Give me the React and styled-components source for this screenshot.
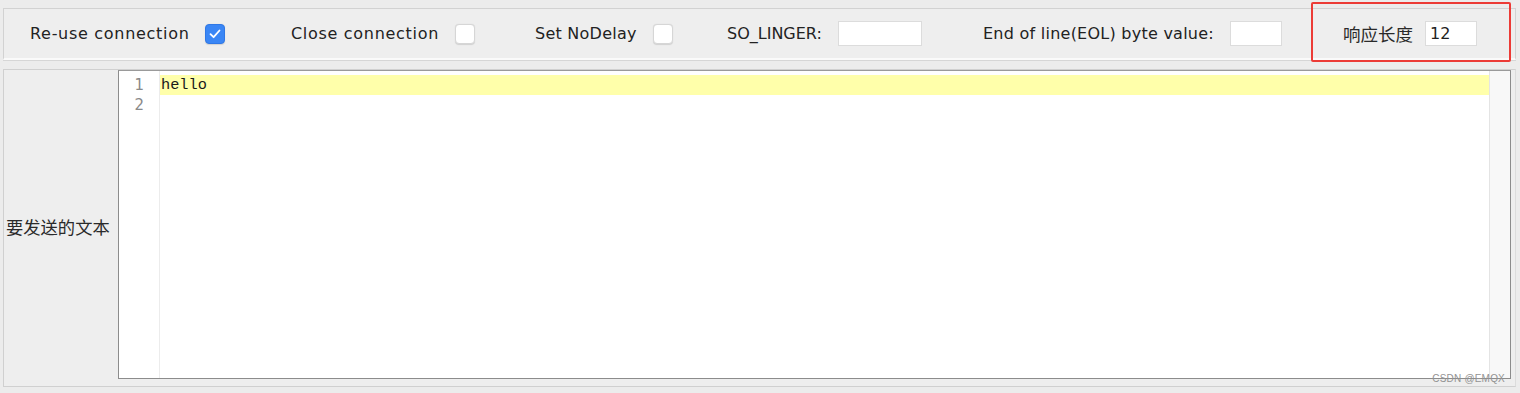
import React from 'react';
import styled, { createGlobalStyle } from 'styled-components';

const GlobalStyle = createGlobalStyle`
  html, body {
    margin: 0;
    padding: 0;
    background: #ececec;
  }
  body {
    font-family: "DejaVu Sans", "Noto Sans CJK SC", sans-serif;
    color: #222;
  }
`;

const App = () => {
  return (
    <Page>
      <GlobalStyle />
      <TopBar>
        <Group>
          <Label spacing={0.7}>Re-use connection</Label>
          <CheckBox checked>
            <svg width="12" height="10" viewBox="0 0 12 10">
              <path d="M1.5 5.2 L4.6 8.2 L10.5 1.5" fill="none" stroke="#fff" strokeWidth="1.8" strokeLinecap="round" strokeLinejoin="round" />
            </svg>
          </CheckBox>
        </Group>
        <Group>
          <Label spacing={0.7}>Close connection</Label>
          <CheckBox />
        </Group>
        <Group>
          <Label spacing={0.25}>Set NoDelay</Label>
          <CheckBox />
        </Group>
        <Group>
          <Label spacing={0}>SO_LINGER:</Label>
          <Field w={84} />
        </Group>
        <Group>
          <Label spacing={0.25}>End of line(EOL) byte value:</Label>
          <Field w={52} />
        </Group>
        <Highlighted>
          <CjkLabel>响应长度</CjkLabel>
          <Field w={52}>12</Field>
        </Highlighted>
      </TopBar>

      <Body>
        <SideLabel>要发送的文本</SideLabel>
        <Editor>
          <Gutter>
            <LineNo>1</LineNo>
            <LineNo>2</LineNo>
          </Gutter>
          <Code>
            <CodeLine active>hello</CodeLine>
            <CodeLine />
          </Code>
          <ScrollTrack />
        </Editor>
        <Watermark>CSDN @EMQX</Watermark>
      </Body>
    </Page>
  );
};

const Page = styled.div`
  width: 1520px;
  height: 393px;
  box-sizing: border-box;
  padding: 8px 4px 0 3px;
  display: flex;
  flex-direction: column;
  overflow: hidden;
`;

const TopBar = styled.div`
  height: 52px;
  box-sizing: border-box;
  border: 1px solid #d2d2d2;
  border-bottom: 2px solid #fafafa;
  box-shadow: 0 1px 0 #d6d6d6;
  background: #eeeeee;
  display: grid;
  grid-template-columns: 261px 244px 192px 256px 328px 1fr;
  align-items: center;
  padding-left: 26px;
`;

const Group = styled.div`
  display: flex;
  align-items: center;
  gap: 16px;
`;

const Label = styled.span`
  font-size: 16px;
  letter-spacing: ${(p) => p.spacing}px;
  color: #222;
  white-space: nowrap;
`;

const CjkLabel = styled.span`
  font-family: "Noto Sans CJK SC", sans-serif;
  font-size: 17.5px;
  color: #2a2a2a;
`;

const CheckBox = styled.div`
  width: 20px;
  height: 20px;
  box-sizing: border-box;
  border-radius: 4px;
  display: flex;
  align-items: center;
  justify-content: center;
  background: ${(p) => (p.checked ? '#3a86f5' : '#ffffff')};
  border: 1px solid ${(p) => (p.checked ? '#2f78e6' : '#d6d6d6')};
  box-shadow: 0 0.5px 1px rgba(0, 0, 0, 0.12);
`;

const Field = styled.div`
  width: ${(p) => p.w}px;
  height: 25px;
  box-sizing: border-box;
  background: #fff;
  border: 1px solid #dcdcdc;
  font-size: 16px;
  padding: 2px 0 0 4px;
  color: #222;
`;

const Highlighted = styled.div`
  position: relative;
  display: flex;
  align-items: center;
  gap: 12px;
  padding-left: 32px;
  height: 100%;

  &::after {
    content: '';
    position: absolute;
    left: 0;
    top: -7px;
    width: 200px;
    height: 60px;
    box-sizing: border-box;
    border: 2px solid #ec3b36;
    border-radius: 2px;
    pointer-events: none;
  }
`;

const Body = styled.div`
  position: relative;
  margin-top: 9px;
  height: 318px;
  box-sizing: border-box;
  border: 1px solid #d0d0d0;
  border-right-color: #dcdcdc;
  background: #eeeeee;
  display: flex;
  padding-bottom: 7px;
`;

const SideLabel = styled.div`
  width: 114px;
  flex: none;
  display: flex;
  align-items: center;
  padding-left: 2px;
  padding-top: 4px;
  box-sizing: border-box;
  font-family: "Noto Sans CJK SC", sans-serif;
  font-size: 17.3px;
  color: #2a2a2a;
  white-space: nowrap;
`;

const Editor = styled.div`
  width: 1393px;
  flex: none;
  box-sizing: border-box;
  border: 1px solid #8c8c8c;
  border-top-color: #9a9a9a;
  background: #fff;
  display: flex;
`;

const Gutter = styled.div`
  width: 41px;
  flex: none;
  border-right: 1px solid #ececec;
  padding-top: 4px;
  box-sizing: border-box;
`;

const LineNo = styled.div`
  height: 20px;
  line-height: 20px;
  text-align: right;
  padding-right: 15px;
  font-size: 15px;
  color: #8a8a8a;
`;

const Code = styled.div`
  flex: 1;
  padding-top: 4px;
`;

const CodeLine = styled.div`
  height: 20px;
  line-height: 20px;
  padding-left: 1px;
  font-family: "Liberation Mono", monospace;
  font-size: 15.3px;
  color: #1a1a1a;
  background: ${(p) => (p.active ? '#ffffaa' : 'transparent')};
`;

const ScrollTrack = styled.div`
  width: 20px;
  flex: none;
  background: #f8f8f8;
  border-left: 1px solid #e4e4e4;
`;

const Watermark = styled.div`
  position: absolute;
  right: 10px;
  bottom: 2px;
  font-family: "Liberation Sans", sans-serif;
  font-size: 10px;
  letter-spacing: 0.2px;
  color: #939393;
`;

export default App;
